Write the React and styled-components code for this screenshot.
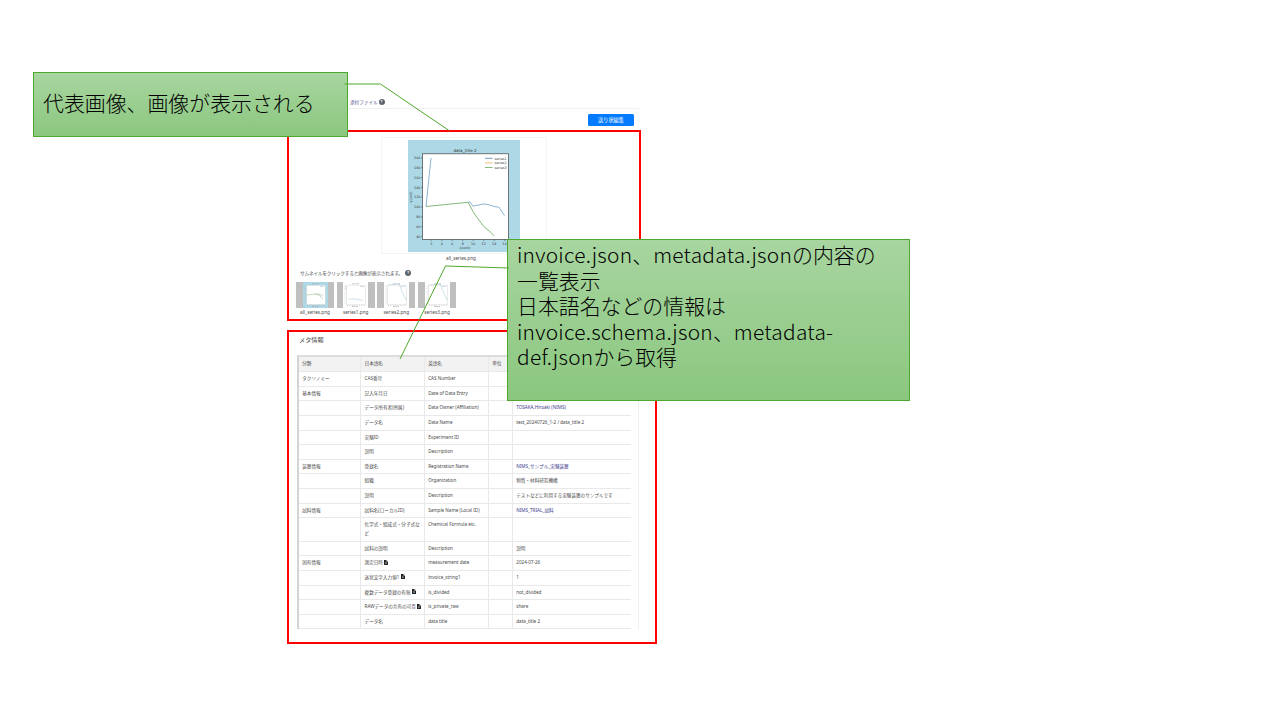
import React from 'react';
import styled, { createGlobalStyle } from 'styled-components';

const Global = createGlobalStyle`
  * { box-sizing: border-box; }
  body { margin: 0; background: #fff; overflow: hidden; }
`;

const Slide = styled.main`
  position: relative;
  width: 1280px;
  height: 720px;
  overflow: hidden;
  background: #fff;
  font-family: 'Noto Sans', 'Noto Sans CJK JP', sans-serif;
`;

const Page = styled.section`
  width: 370px;
  margin-left: 287px;
  padding-top: 95px;
  display: flex;
  flex-direction: column;
  font-size: 4.6px;
  color: #4a4a4a;
`;

const TabBar = styled.nav`
  height: 14px;
  width: 352px;
  padding: 0 0 0 63px;
  display: flex;
  align-items: center;
  gap: 1px;
  border-bottom: 1px solid #f0f0f0;
  color: #4b4486;
`;

const Help = styled.span`
  width: 6px;
  height: 6px;
  border-radius: 50%;
  background: #5d646b;
  color: #fff;
  font-size: 4px;
  line-height: 6px;
  font-weight: 700;
  text-align: center;
`;

const Actions = styled.div`
  height: 21px;
  width: 347px;
  padding-top: 5px;
  display: flex;
  justify-content: flex-end;
`;

const EditButton = styled.button`
  width: 46px;
  height: 12px;
  padding: 0;
  border: 0;
  border-radius: 1.5px;
  background: #047bfc;
  color: #fff;
  font: 5.2px/12px 'Noto Sans CJK JP', sans-serif;
`;

const Frame = styled.section`
  width: ${(p) => p.$w}px;
  height: ${(p) => p.$h}px;
  border: 2px solid #fe0000;
  padding: ${(p) => p.$pad};
  margin-bottom: 9px;
`;

const Preview = styled.div`
  width: 166px;
  height: 117px;
  margin-left: 92px;
  display: flex;
  justify-content: center;
  border: 1px solid #f4f4f4;
  padding-top: 2px;
`;

const Caption = styled.div`
  width: ${(p) => p.$w || 'auto'};
  margin-left: ${(p) => p.$left || 0};
  line-height: 8px;
  text-align: center;
  font-size: 4.7px;
`;

const Hint = styled.div`
  height: 9px;
  margin: 6.5px 0 4px 11px;
  display: flex;
  align-items: center;
  gap: 2.5px;
  font-size: 4.7px;
  letter-spacing: -0.2px;
`;

const Thumbs = styled.div`
  display: flex;
  gap: 2.7px;
  padding-left: 7px;
`;

const Thumb = styled.figure`
  width: 38px;
  margin: 0;
`;

const ThumbImage = styled.div`
  height: 26px;
  padding: 0 6.5px;
  background: #bfbfbf;
  svg { display: block; }
`;

const MetaTitle = styled.h2`
  margin: 0 0 11px 10px;
  font-size: 6.2px;
  line-height: 9px;
  font-weight: 400;
`;

const TableWrap = styled.div`
  width: 342px;
  height: 275px;
  margin-left: 8px;
  border-right: 1px solid #f0f0f0;
`;

const Table = styled.div`
  width: 334px;
  border-top: 2px solid #dcdcdc;
  border-left: 2px solid #d4d4d4;
`;

const Row = styled.div`
  display: grid;
  grid-template-columns: 62.4px 63.6px 64.2px 23.9px 1fr;
  height: ${(p) => p.$h || 14.65}px;
  background: ${(p) => (p.$head ? '#f2f2f2' : 'transparent')};
  border-bottom: 1px solid #e9e9e9;
`;

const Cell = styled.div`
  padding: ${(p) => (p.$head ? 2.4 : 2)}px 3px 0 3.2px;
  border-right: 1px solid ${(p) => (p.$last ? 'transparent' : '#e9e9e9')};
  line-height: 8.5px;
  color: ${(p) => (p.$link ? '#3b3a8c' : '#4a4a4a')};
  white-space: pre;
  svg { margin-left: 1.5px; vertical-align: -0.5px; }
`;

const Callout = styled.aside`
  position: absolute;
  left: ${(p) => p.$x}px;
  top: ${(p) => p.$y}px;
  width: ${(p) => p.$w}px;
  height: ${(p) => p.$h}px;
  padding: ${(p) => p.$pad};
  border: 1px solid #4ea72e;
  background: linear-gradient(#a8d5a0, #8bc77f);
  color: #000;
  font: 300 20.9px/25.5px 'Noto Sans CJK JP', sans-serif;
  white-space: nowrap;
`;

const Latin = styled.span`
  letter-spacing: 0.25px;
`;

const Connectors = styled.svg`
  position: absolute;
  inset: 0;
  pointer-events: none;
`;

const ticks = [200, 180, 160, 140, 120, 100, 80, 60, 40];

function Chart() {
  return (
    <svg width="112" height="112" viewBox="0 0 112 112" fontFamily="DejaVu Sans" fontSize="3.3" fill="#333">
      <rect width="112" height="112" fill="#add8e6" />
      <rect x="14.5" y="13.8" width="86" height="85.6" fill="#fff" stroke="#444" strokeWidth=".7" />
      <text x="57" y="11.8" textAnchor="middle" fontSize="4.1">data_title 2</text>
      {ticks.map((t, i) => (
        <g key={t}>
          <text x="12.4" y={19.1 + i * 9.8} textAnchor="end">{t}</text>
          <path d={`M13 ${17.9 + i * 9.8}h1.5`} stroke="#444" strokeWidth=".5" />
        </g>
      ))}
      {[2, 4, 6, 8, 10, 12, 14, 16].map((t, i) => (
        <g key={t}>
          <text x={23.2 + i * 10.5} y="104.5" textAnchor="middle">{t}</text>
          <path d={`M${23.2 + i * 10.5} 99.5v1.5`} stroke="#444" strokeWidth=".5" />
        </g>
      ))}
      <text x="57" y="108.9" textAnchor="middle">x(unit)</text>
      <text transform="translate(4.2 57) rotate(-90)" textAnchor="middle">y(unit)</text>
      <g fill="none" strokeWidth=".9">
        <path d="M18 66.5L23 18M60 62h2l3 4.2 4-.9 6-1.3 5 .5 6 2 5 .7 5.5 8.5" stroke="#7daccf" />
        <path d="M18 66.5L60 62.3l5 9.2 5 7.3 6 8 5 4 5.4 5.2" stroke="#76b06c" />
        <path d="M77 18.3h7.5" stroke="#5f93bb" />
        <path d="M77 22.9h7.5" stroke="#f2b36d" />
        <path d="M77 27.5h7.5" stroke="#76b06c" />
      </g>
      {[1, 2, 3].map((n) => (
        <text key={n} x="86.5" y={14.9 + n * 4.6} fontSize="3.4">series{n}</text>
      ))}
    </svg>
  );
}

const curves = {
  all_series: 'M4 13L12 12l4 1 4 4M12 12h4l4 2',
  series1: 'M3 4v4M5 18c2-2 3-1 5-1s7 0 10 2',
  series2: 'M4 3L15 2l3 7 4 9',
  series3: 'M4 3L15 2l3 7 4 9',
};

function MiniChart({ name }) {
  const active = name === 'all_series';
  return (
    <svg width="25" height="26" viewBox="0 0 25 26">
      <rect width="25" height="26" fill={active ? '#add8e6' : '#fff'} />
      <rect x="3.5" y="3.2" width="19" height="19.5" fill="#fff" stroke={active ? '#c6d5da' : '#e2e2e2'} strokeWidth=".7" />
      <path d="M9 1.8h7M9 24.5h6" stroke="#aaa" strokeWidth=".7" strokeDasharray="2 .5" />
      <path d="M2 4v18M4 23.5h18" stroke="#bbb" strokeWidth=".8" strokeDasharray=".8 1.6" />
      <path d="M17 4.5h4" stroke="#bcd" strokeWidth=".7" />
      <path d={curves[name]} fill="none" stroke={active ? '#a8c9a0' : '#b8d6df'} strokeWidth=".7" />
    </svg>
  );
}

function FileIcon() {
  return (
    <svg width="4" height="5" viewBox="0 0 8 10">
      <path d="M0 0h5l3 3v7H0z" fill="#222" />
      <path d="M5 0v3h3M2 5h3M2 7.2h4" stroke="#fff" strokeWidth=".8" fill="none" />
    </svg>
  );
}

const rows = [
  ['タクソノミー', 'CAS番号', 'CAS Number', ''],
  ['基本情報', '記入年月日', 'Date of Data Entry', ''],
  ['', 'データ所有者(所属)', 'Data Owner (Affiliation)', 'TOSAKA,Hiroaki (NIMS)', { link: true }],
  ['', 'データ名', 'Data Name', 'test_20240726_1-2 / data_title 2'],
  ['', '実験ID', 'Experiment ID', ''],
  ['', '説明', 'Description', ''],
  ['装置情報', '登録名', 'Registration Name', 'NIMS_サンプル_実験装置', { link: true }],
  ['', '組織', 'Organization', '物質・材料研究機構'],
  ['', '説明', 'Description', 'テストなどに利用する実験装置のサンプルです'],
  ['試料情報', '試料名(ローカルID)', 'Sample Name (Local ID)', 'NIMS_TRIAL_試料', { link: true }],
  ['', '化学式・組成式・分子式な\nど', 'Chemical Formula etc.', '', { h: 23.2 }],
  ['', '試料の説明', 'Description', '説明'],
  ['固有情報', '測定日時', 'measurement date', '2024-07-26', { file: true }],
  ['', '送状文字入力値1', 'invoice_string1', '1', { file: true }],
  ['', '複数データ登録の有無', 'is_divided', 'not_divided', { file: true }],
  ['', 'RAWデータの共有の可否', 'is_private_raw', 'share', { file: true }],
  ['', 'データ名', 'data title', 'data_title 2'],
];

export default function App() {
  return (
    <Slide>
      <Global />
      <Page>
        <TabBar>添付ファイル<Help>?</Help></TabBar>
        <Actions><EditButton>送り状編集</EditButton></Actions>
        <Frame $w={354} $h={191} $pad="5px 0 0">
          <Preview><Chart /></Preview>
          <Caption $w="60px" $left="142px">all_series.png</Caption>
          <Hint>サムネイルをクリックすると画像が表示されます。<Help>?</Help></Hint>
          <Thumbs>
            {Object.keys(curves).map((name) => (
              <Thumb key={name}>
                <ThumbImage><MiniChart name={name} /></ThumbImage>
                <Caption>{name}.png</Caption>
              </Thumb>
            ))}
          </Thumbs>
        </Frame>
        <Frame $w={370} $h={314} $pad="3px 0 0">
          <MetaTitle>メタ情報</MetaTitle>
          <TableWrap>
            <Table>
              <Row $head $h={15}>
                {['分類', '日本語名', '英語名', '単位', '値'].map((t) => <Cell key={t} $head>{t}</Cell>)}
              </Row>
              {rows.map(([group, ja, en, value, opt = {}], i) => (
                <Row key={i} $h={opt.h}>
                  <Cell>{group}</Cell>
                  <Cell>{ja}{opt.file && <FileIcon />}</Cell>
                  <Cell>{en}</Cell>
                  <Cell />
                  <Cell $last $link={opt.link}>{value}</Cell>
                </Row>
              ))}
            </Table>
          </TableWrap>
        </Frame>
      </Page>
      <Callout $x={33} $y={72} $w={315} $h={65} $pad="17px 9px">代表画像、画像が表示される</Callout>
      <Callout $x={507} $y={239} $w={403} $h={162} $pad="2px 9px">
        <Latin>invoice.json</Latin>、<Latin>metadata.json</Latin>の内容の<br />
        一覧表示<br />
        日本語名などの情報は<br />
        <Latin>invoice.schema.json</Latin>、<Latin>metadata-</Latin><br />
        <Latin>def.json</Latin>から取得
      </Callout>
      <Connectors width="1280" height="720" fill="none" stroke="#4ea72e">
        <path d="M344.5 84H380.5L449 130.5" />
        <path d="M509 268L445.5 266L400 359" />
      </Connectors>
    </Slide>
  );
}
